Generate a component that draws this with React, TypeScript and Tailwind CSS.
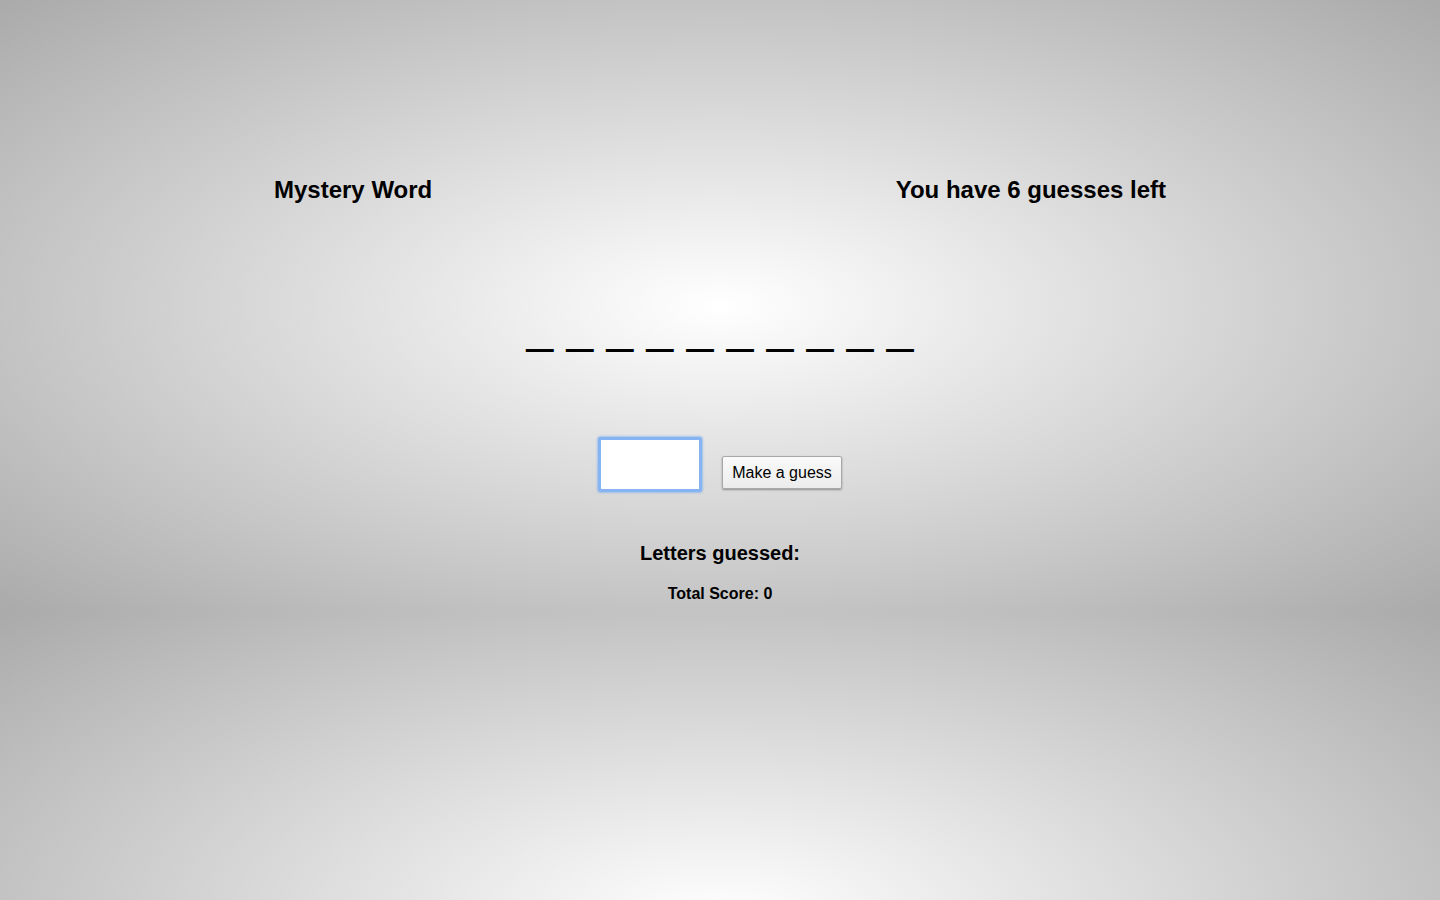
const App = () => {
  return (
    <div className="min-h-screen w-full bg-[radial-gradient(ellipse_at_center,#ffffff_0%,#aaaaaa_100%)] bg-[length:100%_612px] bg-repeat font-['Liberation_Sans',Arial,sans-serif] text-black">
      {/* Header row */}
      <div className="flex justify-between px-[274px] pt-[176px]">
        <h2 className="text-[24px] font-bold leading-[28px]">Mystery Word</h2>
        <h2 className="text-[24px] font-bold leading-[28px]">You have 6 guesses left</h2>
      </div>

      {/* Word blanks */}
      <div className="mt-[94px] text-center text-[48px] leading-[55px] whitespace-pre">
        _ _ _ _ _ _ _ _ _ _
      </div>

      {/* Guess form */}
      <div className="mt-[84px] flex items-end justify-center gap-[20px]">
        <input
          type="text"
          className="h-[55px] w-[104px] rounded-[3px] border-[3px] border-[#86b4f2] bg-white shadow-[0_0_2px_1px_rgba(120,170,240,0.6)] outline-none"
        />
        <button
          type="button"
          className="mb-[3px] h-[33px] w-[120px] rounded-[2px] border border-[#a8a8a8] bg-[linear-gradient(#fafafa,#ececec)] text-[16px] shadow-[0_1px_2px_rgba(0,0,0,0.35)]"
        >
          Make a guess
        </button>
      </div>

      {/* Letters / score */}
      <h3 className="mt-[49px] text-center text-[20px] font-bold leading-[24px]">Letters guessed:</h3>
      <p className="mt-[20px] text-center text-[16px] font-bold leading-[18px]">Total Score: 0</p>
    </div>
  );
};

export default App;
